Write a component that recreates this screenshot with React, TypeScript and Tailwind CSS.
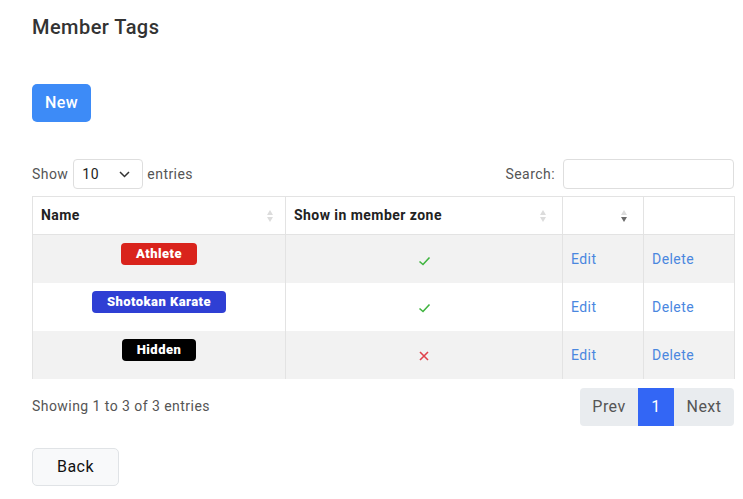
import React from "react";

type Tag = { name: string; color: string; visible: boolean };

const tags: Tag[] = [
  { name: "Athlete", color: "bg-[#d9231c]", visible: true },
  { name: "Shotokan Karate", color: "bg-[#2f3fd4]", visible: true },
  { name: "Hidden", color: "bg-black", visible: false },
];

function SortIcon({ active }: { active?: boolean }) {
  return (
    <svg width="8" height="14" viewBox="0 0 8 14" className="shrink-0">
      <path d="M4 1 L7 6 H1 Z" fill="#dcdcdc" />
      <path d="M4 13 L7 8 H1 Z" fill={active ? "#6b6b6b" : "#dcdcdc"} />
    </svg>
  );
}

function Check() {
  return (
    <svg width="13" height="10" viewBox="0 0 13 10" className="inline-block">
      <path d="M1.5 5.5 L5 8.5 L11.5 1.5" fill="none" stroke="#3fb43f" strokeWidth="1.6" />
    </svg>
  );
}

function Cross() {
  return (
    <svg width="10" height="10" viewBox="0 0 10 10" className="inline-block">
      <path d="M1 1 L9 9 M9 1 L1 9" fill="none" stroke="#e0424b" strokeWidth="1.6" />
    </svg>
  );
}

export default function App() {
  return (
    <div
      className="min-h-screen bg-white px-8 pt-[15px] tracking-[0.45px] text-[#333]"
      style={{ fontFamily: "Roboto, 'Liberation Sans', sans-serif" }}
    >
      <h1 className="text-[20px] font-medium leading-[24px] text-[#333]">Member Tags</h1>

      <button className="mt-[45px] h-[38px] rounded-[5px] bg-[#3d8bf7] px-[13px] text-[16px] font-medium text-white">
        New
      </button>

      <div className="mt-[37px] flex w-[702px] items-center justify-between text-[14px] text-[#555]">
        <div className="flex items-center">
          <span>Show</span>
          <div className="ml-[5px] flex h-[30px] w-[70px] items-center justify-between rounded-[4px] border border-[#dedede] pl-[8px] pr-[12px] text-[#222]">
            <span>10</span>
            <svg width="11" height="7" viewBox="0 0 11 7">
              <path d="M1 1 L5.5 5.5 L10 1" fill="none" stroke="#333" strokeWidth="1.5" />
            </svg>
          </div>
          <span className="ml-[4px]">entries</span>
        </div>
        <div className="flex items-center">
          <span>Search:</span>
          <div className="ml-[8px] h-[30px] w-[171px] rounded-[4px] border border-[#dedede]" />
        </div>
      </div>

      <table className="mt-[7px] w-[702px] table-fixed border-collapse text-[14px]">
        <colgroup>
          <col className="w-[253px]" />
          <col className="w-[277px]" />
          <col className="w-[81px]" />
          <col className="w-[91px]" />
        </colgroup>
        <thead>
          <tr className="h-[38px] border-y border-[#e3e3e3] text-left">
            <th className="border-x border-[#e3e3e3] px-[8px] font-bold text-[#222]">
              <div className="flex items-center justify-between pr-[3px]">
                <span>Name</span>
                <SortIcon />
              </div>
            </th>
            <th className="border-x border-[#e3e3e3] px-[8px] font-bold text-[#222]">
              <div className="flex items-center justify-between pr-[7px]">
                <span>Show in member zone</span>
                <SortIcon />
              </div>
            </th>
            <th className="border-x border-[#e3e3e3] px-[8px]">
              <div className="flex items-center justify-end pr-[7px]">
                <SortIcon active />
              </div>
            </th>
            <th className="border-x border-[#e3e3e3]" />
          </tr>
        </thead>
        <tbody>
          {tags.map((t, i) => (
            <tr key={t.name} className={`h-[48px] ${i % 2 === 0 ? "bg-[#f2f2f2]" : "bg-white"}`}>
              <td className="border-x border-[#e3e3e3] pb-[10px] text-center align-middle">
                <span
                  className={`inline-block rounded-[4px] px-[15px] text-[13px] font-black leading-[22px] text-white ${t.color}`}
                >
                  {t.name}
                </span>
              </td>
              <td className="border-x border-[#e3e3e3] pt-[2px] text-center align-middle">
                {t.visible ? <Check /> : <Cross />}
              </td>
              <td className="border-x border-[#e3e3e3] px-[8px] pt-[2px] text-[#4a87df]">Edit</td>
              <td className="border-x border-[#e3e3e3] px-[8px] pt-[2px] text-[#4a87df]">Delete</td>
            </tr>
          ))}
        </tbody>
      </table>

      <div className="mt-[9px] flex w-[702px] items-center justify-between">
        <span className="text-[14px] text-[#555]">Showing 1 to 3 of 3 entries</span>
        <div className="flex h-[38px] overflow-hidden rounded-[4px] text-[16px]">
          <span className="flex w-[58px] items-center justify-center bg-[#e9ecef] text-[#555]">Prev</span>
          <span className="flex w-[36px] items-center justify-center bg-[#3366f5] text-white">1</span>
          <span className="flex w-[60px] items-center justify-center bg-[#e9ecef] text-[#555]">Next</span>
        </div>
      </div>

      <button className="mt-[22px] h-[38px] w-[87px] rounded-[5px] border border-[#e0e3e6] bg-[#f8f9fa] text-[16px] text-[#111]">
        Back
      </button>
    </div>
  );
}
